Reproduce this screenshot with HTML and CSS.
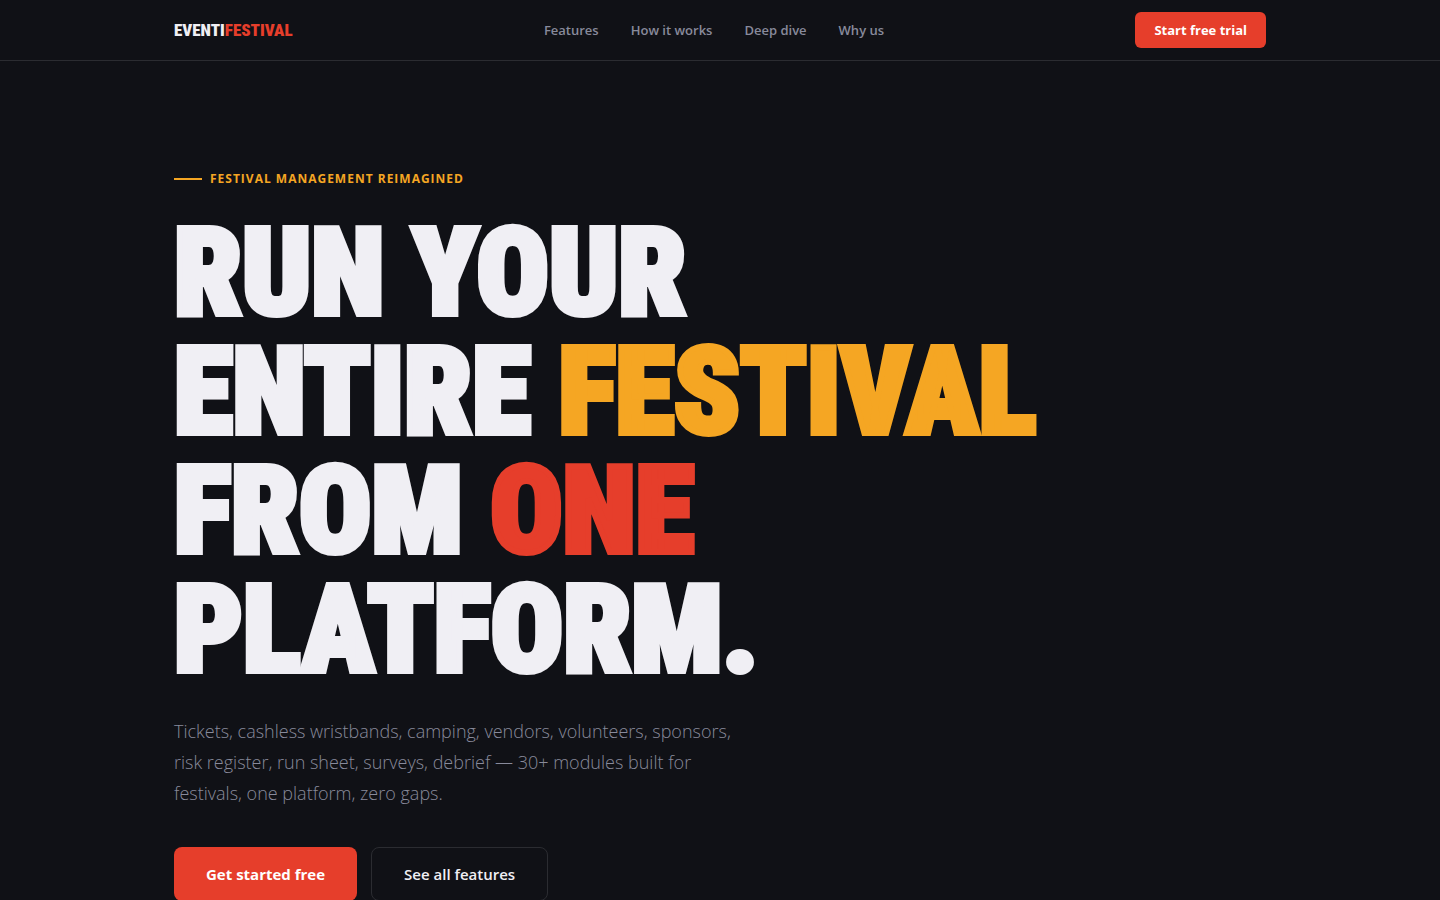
FILE: index.html
```html
<!DOCTYPE html>
<html lang="en">
<head>
  <meta charset="utf-8">
  <meta name="viewport" content="width=device-width, initial-scale=1">
  <title>EventiFestival</title>
  <link rel="stylesheet" href="styles.css">
</head>
<body>
  <nav class="nav">
    <div class="nav-inner">
      <a href="#" class="logo">EVENTI<span>FESTIVAL</span></a>
      <div class="nav-links">
        <a href="#features">Features</a>
        <a href="#how">How it works</a>
        <a href="#deep-dive">Deep dive</a>
        <a href="#why">Why us</a>
      </div>
      <button type="button" class="nav-cta">Start free trial</button>
    </div>
  </nav>

  <main class="hero">
    <div class="eyebrow">Festival management reimagined</div>
    <h1>
      Run your<br>
      entire <span class="amber">festival</span><br>
      from <span class="red">one</span><br>
      platform.
    </h1>
    <p class="hero-sub">Tickets, cashless wristbands, camping, vendors, volunteers, sponsors, risk register, run sheet, surveys, debrief — 30+ modules built for festivals, one platform, zero gaps.</p>
    <div class="hero-actions">
      <button type="button" class="btn btn-primary">Get started free</button>
      <button type="button" class="btn btn-ghost">See all features</button>
    </div>
  </main>
</body>
</html>
```
FILE: styles.css
```css
:root {
  --bg: #101116;
  --text: #f0eff4;
  --muted: #888a9b;
  --line: #2b2c31;
  --red: #e63e2b;
  --amber: #f5a623;
  --display: Impact, "Roboto Condensed", "Liberation Sans Narrow", sans-serif;
  --body: "Segoe UI", "Open Sans", "Noto Sans", sans-serif;
}

* {
  box-sizing: border-box;
  margin: 0;
  padding: 0;
}

body {
  background: var(--bg);
  color: var(--text);
  font-family: var(--body);
}

a {
  color: inherit;
  text-decoration: none;
}

button {
  font-family: inherit;
  cursor: pointer;
}

.nav {
  border-bottom: 1px solid var(--line);
}

.nav-inner,
.hero {
  max-width: 1140px;
  margin: 0 auto;
  padding: 0 24px;
}

.nav-inner {
  display: flex;
  align-items: center;
  justify-content: space-between;
  height: 60px;
}

.logo {
  font-family: var(--display);
  font-size: 17px;
  font-weight: 900;
}

.logo span {
  color: var(--red);
}

.nav-links {
  display: flex;
  gap: 32px;
  color: var(--muted);
  font-size: 13px;
  font-weight: 600;
}

.nav-cta {
  height: 36px;
  padding: 0 19px;
  border: none;
  border-radius: 6px;
  background: var(--red);
  color: #fff;
  font-size: 13px;
  font-weight: 700;
}

.hero {
  padding-top: 109px;
  padding-bottom: 80px;
}

.eyebrow {
  display: flex;
  align-items: center;
  gap: 8px;
  margin-bottom: 26px;
  color: var(--amber);
  font-size: 12px;
  font-weight: 700;
  line-height: 18px;
  letter-spacing: 1px;
  text-transform: uppercase;
}

.eyebrow::before {
  content: "";
  width: 28px;
  height: 2px;
  background: var(--amber);
}

h1 {
  margin-bottom: 26px;
  font-family: var(--display);
  font-size: 120px;
  font-weight: 900;
  line-height: 119px;
  text-transform: uppercase;
  -webkit-text-stroke: 6px currentColor;
}

.amber {
  color: var(--amber);
}

.red {
  color: var(--red);
}

.hero-sub {
  max-width: 580px;
  margin-bottom: 38px;
  color: var(--muted);
  font-size: 18px;
  font-weight: 300;
  line-height: 31px;
}

.hero-actions {
  display: flex;
  gap: 14px;
}

.btn {
  height: 54px;
  padding: 0 32px;
  border: none;
  border-radius: 8px;
  font-size: 15px;
}

.btn-primary {
  background: var(--red);
  color: #fff;
  font-weight: 700;
}

.btn-ghost {
  border: 1px solid var(--line);
  background: transparent;
  color: var(--text);
  font-weight: 600;
}
```
